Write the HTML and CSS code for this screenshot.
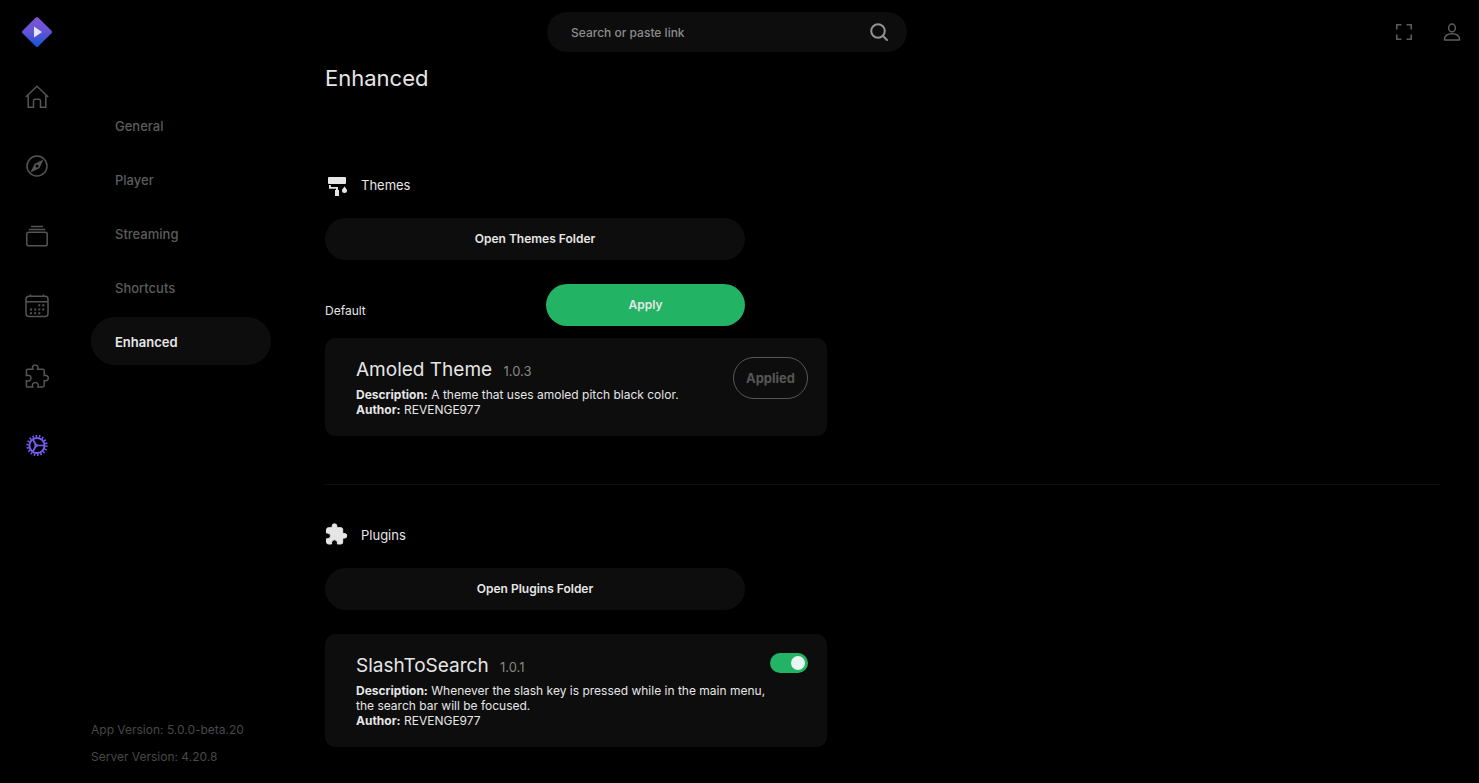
FILE: index.html
```html
<!DOCTYPE html>
<html lang="en">
<head>
<meta charset="utf-8">
<title>Settings - Enhanced</title>
<link rel="stylesheet" href="styles.css">
</head>
<body>
<header class="topbar">
  <a class="logo" href="#" aria-label="Home">
    <svg width="32" height="32" viewBox="0 0 32 32">
      <defs><linearGradient id="brand" x1="0" y1="0" x2="0" y2="1"><stop offset="0" stop-color="#8055d8"/><stop offset=".5" stop-color="#6253d6"/><stop offset="1" stop-color="#0f55d6"/></linearGradient></defs>
      <path d="M14.800 1.500Q16 .5 17.200 1.500L30.500 14.800Q31.500 16 30.500 17.200L17.200 30.500Q16 31.500 14.800 30.500L1.500 17.200Q.5 16 1.500 14.800Z" fill="url(#brand)"/>
      <path d="M13 10.500v11l8-5.500z" fill="#e6e4f8"/>
    </svg>
  </a>
  <form class="search">
    <input class="search-input" type="text" placeholder="Search or paste link" aria-label="Search or paste link">
    <button class="search-button" type="button" aria-label="Search">
      <svg width="20" height="20" viewBox="0 0 20 20" fill="none" stroke="#939393" stroke-width="2" stroke-linecap="round"><circle cx="9" cy="9" r="6.800"/><path d="M14 14l4 4"/></svg>
    </button>
  </form>
  <div class="top-actions">
    <button class="icon-button" type="button" aria-label="Fullscreen">
      <svg width="18" height="18" viewBox="0 0 18 18" fill="none" stroke="#5c5c5c" stroke-width="1.600"><path d="M1.800 6.500V1.800h4.700M11.500 1.800h4.700v4.700M16.200 11.500v4.700h-4.700M6.500 16.200H1.800v-4.700"/></svg>
    </button>
    <button class="icon-button" type="button" aria-label="Account">
      <svg width="18" height="18" viewBox="0 0 18 18" fill="none" stroke="#5c5c5c" stroke-width="1.500" stroke-linejoin="round"><ellipse cx="9" cy="4.900" rx="3.400" ry="3.900"/><path d="M1.400 17.100c0-4 2.900-6.300 7.600-6.300s7.600 2.300 7.600 6.300z"/></svg>
    </button>
  </div>
</header>
<div class="shell">
  <nav class="rail" aria-label="Main">
    <a class="rail-link" href="#" aria-label="Board"><svg class="rail-icon" viewBox="0 0 24 24"><path d="M.8 13L12 2.300 23.200 13M3.200 10.800v12.500h5.300v-6.300q0-1.700 1.700-1.700h3.600q1.700 0 1.700 1.700v6.300h5.300V10.800"/></svg></a>
    <a class="rail-link" href="#" aria-label="Discover"><svg class="rail-icon" viewBox="0 0 24 24"><circle cx="12" cy="12" r="10"/><path d="M17 7l-3.200 6.800L7 17l3.200-6.800z" fill="#555"/><circle cx="12" cy="12" r="1.500" fill="#000" stroke="none"/></svg></a>
    <a class="rail-link" href="#" aria-label="Library"><svg class="rail-icon" viewBox="0 0 24 24"><rect x="1.800" y="8.300" width="20.400" height="13.400" rx="1.800"/><path d="M3.800 5.500h16.400M6 2.600h12"/></svg></a>
    <a class="rail-link" href="#" aria-label="Calendar"><svg class="rail-icon" viewBox="0 0 24 24"><rect x="1" y="2.300" width="22" height="20.200" rx="3"/><path d="M1 7.800h22M5.500.6v2M18.500.6v2"/><path d="M13.300 11.300h2M17.300 11.300h2M5 15.400h2M9.200 15.400h2M13.300 15.400h2M17.300 15.400h2M5 19.200h2M9.200 19.200h2M13.300 19.200h2" stroke-width="2"/></svg></a>
    <a class="rail-link" href="#" aria-label="Addons"><svg class="rail-icon" viewBox="0 0 24 24"><path d="M7.800 5.200C6.900 2.800 8 .9 10.200.9s3.300 1.900 2.400 4.300h5.200q1.400 0 1.400 1.400v5c2.300-.8 4.100.4 4.100 2.500s-1.800 3.300-4.100 2.500v5q0 1.400-1.400 1.400h-4.900c.8-2.800-.4-4.500-2.600-4.500S6.900 20.200 7.700 23H2.800q-1.400 0-1.400-1.400v-4.800c2.800.8 4.600-.5 4.600-2.700s-1.800-3.400-4.600-2.600V6.600q0-1.400 1.400-1.400z"/></svg></a>
    <a class="rail-link" href="#" aria-label="Settings" aria-current="page"><svg class="rail-icon active" viewBox="0 0 24 24"><circle cx="12" cy="11.500" r="7.600" stroke-width="2"/><circle cx="12" cy="11.500" r="9.500" stroke-width="2.200" stroke-dasharray="1.500 1.816"/><circle cx="11" cy="11.500" r="1"/><path d="M12 11.500h8M11 11L7.500 5M11 12l-3.500 6" stroke-width="1.700"/></svg></a>
  </nav>
  <aside class="side">
    <nav class="menu" aria-label="Settings sections">
      <a class="menu-link" href="#">General</a>
      <a class="menu-link" href="#">Player</a>
      <a class="menu-link" href="#">Streaming</a>
      <a class="menu-link" href="#">Shortcuts</a>
      <a class="menu-link selected" href="#" aria-current="page">Enhanced</a>
    </nav>
    <div class="versions"><div>App Version: 5.0.0-beta.20</div><div>Server Version: 4.20.8</div></div>
  </aside>
  <main class="content">
    <h1 class="page-title">Enhanced</h1>
    <section class="section">
      <h2 class="section-title"><svg width="24" height="24" viewBox="0 0 24 24" fill="#e6e6e6"><rect x="3" y="4" width="18" height="7" rx="1"/><path d="M4 12h1.800v2H13v3h1v6h-4v-6h1v-1.200H4zM19.500 13.500c1.400 1.700 2.500 2.700 2.500 3.900a2.500 2.500 0 0 1-5 0c0-1.200 1.100-2.200 2.500-3.900z"/></svg>Themes</h2>
      <button class="button folder" type="button">Open Themes Folder</button>
      <div class="default-row"><span class="default-label">Default</span><button class="button apply" type="button">Apply</button></div>
      <article class="card">
        <div class="card-text">
          <h3 class="card-title">Amoled Theme <span class="card-version">1.0.3</span></h3>
          <p class="card-line"><b>Description:</b> A theme that uses amoled pitch black color.</p>
          <p class="card-line"><b>Author:</b> REVENGE977</p>
        </div>
        <button class="applied" type="button" disabled>Applied</button>
      </article>
    </section>
    <hr class="divider">
    <section class="section">
      <h2 class="section-title"><svg width="24" height="24" viewBox="1 1 24 24" fill="#e6e6e6" stroke="#e6e6e6" stroke-linejoin="round"><path d="M20.500 11.500H18.700V7.500a1.800 1.800 0 0 0-1.800-1.800h-4V4.200a2.300 2.300 0 0 0-4.800 0V5.700H4.500a2 2 0 0 0-2 1.800v3.600h1.200a2.800 2.800 0 0 1 0 5.600H2.500V20a2 2 0 0 0 2 2h3.100v-1.300a2.800 2.800 0 0 1 5.800 0V22h3.500a1.800 1.800 0 0 0 1.800-2v-3.900h1.800a2.300 2.300 0 0 0 0-4.600z"/></svg>Plugins</h2>
      <button class="button folder" type="button">Open Plugins Folder</button>
      <article class="card">
        <div class="card-text">
          <h3 class="card-title">SlashToSearch <span class="card-version">1.0.1</span></h3>
          <p class="card-line"><b>Description:</b> Whenever the slash key is pressed while in the main menu, the search bar will be focused.</p>
          <p class="card-line"><b>Author:</b> REVENGE977</p>
        </div>
        <input class="toggle" type="checkbox" aria-label="Enable SlashToSearch" checked>
      </article>
    </section>
  </main>
</div>
</body>
</html>
```

FILE: styles.css
```css
* { box-sizing: border-box; }
body {
  margin: 0;
  min-height: 100vh;
  display: flex;
  flex-direction: column;
  background: #000;
  color: #e6e6e6;
  font-family: Inter, "Open Sans", sans-serif;
  font-size: 13px;
}
button, input { font: inherit; color: inherit; border: 0; margin: 0; }
button { padding: 0; background: none; }
a { color: inherit; text-decoration: none; }
h1, h2, h3, p { margin: 0; font-weight: 400; }

.topbar { height: 64px; display: flex; align-items: center; justify-content: space-between; padding-right: 3px; }
.logo { width: 74px; display: flex; justify-content: center; }
.search { width: 360px; height: 40px; display: flex; align-items: center; padding: 0 18px 0 24px; border-radius: 20px; background: #0d0d0d; }
.search-input { flex: 1; min-width: 0; padding: 0; background: none; outline: 0; font-size: 12px; font-weight: 500; }
.search-input::placeholder { color: #8c8c8c; opacity: 1; }
.search-button { display: flex; }
.top-actions { display: flex; }
.icon-button { width: 48px; height: 48px; display: flex; align-items: center; justify-content: center; }

.shell { flex: 1; display: flex; }
.rail { width: 74px; display: flex; flex-direction: column; gap: 6px; }
.rail-link { height: 64px; display: flex; align-items: center; justify-content: center; }
.rail-icon { width: 24px; height: 24px; fill: none; stroke: #555; stroke-width: 1.500; }
.rail-icon.active { stroke: #7b5bf5; }

.side { width: 251px; padding: 37px 54px 13px 17px; display: flex; flex-direction: column; justify-content: space-between; }
.menu { display: flex; flex-direction: column; gap: 6px; }
.menu-link { height: 48px; padding: 2px 24px 0; display: flex; align-items: center; border-radius: 24px; color: #5c5c5c; font-weight: 500; }
.menu-link.selected { background: #0d0d0d; color: #e6e6e6; font-weight: 600; }
.versions { color: #484848; font-size: 12px; line-height: 27px; white-space: nowrap; }

.content { flex: 1; padding-right: 39px; }
.page-title { font-size: 22px; line-height: 28px; margin-bottom: 80px; }
.section { display: flex; flex-direction: column; align-items: flex-start; }
.section-title { display: flex; align-items: center; gap: 12px; height: 26px; margin-bottom: 20px; font-size: 13px; }
.button { height: 42px; padding-bottom: 2px; border-radius: 21px; font-size: 12px; font-weight: 600; }
.folder { width: 420px; margin-bottom: 24px; background: #0d0d0d; }
.default-row { width: 420px; display: flex; justify-content: space-between; margin-bottom: 12px; }
.default-label { align-self: flex-end; line-height: 30px; font-size: 12px; }
.apply { width: 199px; background: #22b365; }
.card { width: 502px; display: flex; justify-content: space-between; align-items: flex-start; padding: 19px 19px 19px 31px; border-radius: 10px; background: #0d0d0d; }
.card-text { max-width: 414px; }
.card-title { height: 26px; font-size: 19px; line-height: 26px; margin-bottom: 4px; }
.card-version { margin-left: 6px; font-size: 13px; color: #868686; }
.card-line { font-size: 12px; line-height: 15px; }
.applied { width: 75px; height: 42px; border: 1px solid #565656; border-radius: 21px; color: #565656; font-size: 13px; font-weight: 700; }
.toggle { appearance: none; flex: none; width: 38px; height: 20px; padding: 3px; display: flex; justify-content: flex-end; border-radius: 10px; background: #22b365; }
.toggle::before { content: ""; width: 14px; height: 14px; border-radius: 50%; background: #e8f7ef; }
.toggle:not(:checked) { justify-content: flex-start; background: #444; }
.divider { width: 100%; margin: 48px 0 37px; border: 0; border-top: 1px solid #0d0d0d; }
```
